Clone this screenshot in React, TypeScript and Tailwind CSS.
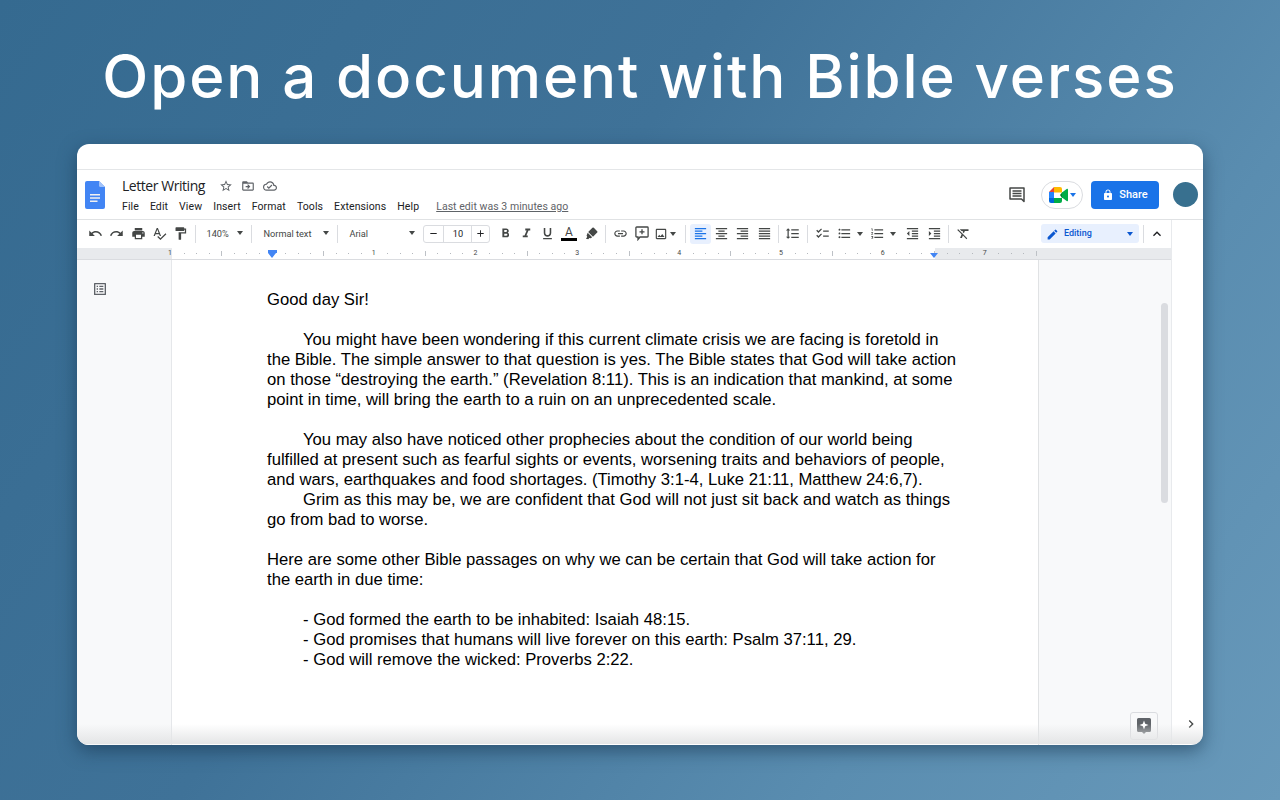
import type { ReactNode } from "react";
import {
  MdUndo,
  MdRedo,
  MdPrint,
  MdSpellcheck,
  MdFormatPaint,
  MdFormatBold,
  MdFormatItalic,
  MdFormatUnderlined,
  MdLink,
  MdOutlineImage,
  MdFormatAlignLeft,
  MdFormatAlignCenter,
  MdFormatAlignRight,
  MdFormatAlignJustify,
  MdFormatLineSpacing,
  MdChecklist,
  MdFormatListBulleted,
  MdFormatListNumbered,
  MdFormatIndentDecrease,
  MdFormatIndentIncrease,
  MdFormatClear,
  MdEdit,
  MdExpandLess,
  MdChevronRight,
  MdStarBorder,
  MdDriveFileMoveOutline,
  MdOutlineCloudDone,
  MdLock,
  MdOutlineListAlt,
  MdAdd,
  MdRemove,
} from "react-icons/md";

const menus = ["File", "Edit", "View", "Insert", "Format", "Tools", "Extensions", "Help"];

const Caret = ({ className = "border-t-[#444746]" }: { className?: string }) => (
  <span className={`inline-block w-0 h-0 border-x-[3.5px] border-x-transparent border-t-[4px] ${className}`} />
);

const Sep = ({ className = "mx-[4px]" }: { className?: string }) => (
  <span className={`w-px h-[18px] bg-[#dadce0] shrink-0 ${className}`} />
);

const Tool = ({ children, active = false }: { children: ReactNode; active?: boolean }) => (
  <span
    className={`w-[21.3px] h-[20px] flex items-center justify-center shrink-0 rounded-[3px] text-[15px] ${
      active ? "bg-[#e8f0fe] text-[#1a73e8]" : "text-[#444746]"
    }`}
  >
    {children}
  </span>
);

const DocsIcon = () => (
  <svg width="20" height="28" viewBox="0 0 20 28" className="shrink-0">
    <path d="M2 0h12l6 6v20a2 2 0 0 1-2 2H2a2 2 0 0 1-2-2V2a2 2 0 0 1 2-2z" fill="#4285f4" />
    <path d="M14 0l6 6h-4.500A1.500 1.500 0 0 1 14 4.500z" fill="#a1c2fa" />
    <path d="M5 13h10v1.400H5zM5 16.300h10v1.400H5zM5 19.600h7.500v1.400H5z" fill="#f1f1f1" />
  </svg>
);

const MeetIcon = () => (
  <svg width="19" height="16" viewBox="0 0 19 16" className="shrink-0">
    <path d="M0 5l5-5v5z" fill="#ea4335" />
    <path d="M0 5h5v6H0z" fill="#2684fc" />
    <path d="M0 11h5v5H2a2 2 0 0 1-2-2z" fill="#0066da" />
    <path d="M5 0h6a2 2 0 0 1 2 2v3.500H5z" fill="#ffba00" />
    <path d="M5 11h8v3a2 2 0 0 1-2 2H5z" fill="#00ac47" />
    <path d="M13 5.500L11 8l2 3 1-.5V5.500z" fill="#00832d" />
    <path d="M13 5.500L18 1.800c.5-.3 1 0 1 .6v11.200c0 .6-.5.9-1 .6L13 10.500z" fill="#00ac47" />
  </svg>
);

// comment history icon, square bubble with the tail at the bottom right
const CommentIcon = () => (
  <svg width="16" height="16" viewBox="0 0 16 16" fill="none" className="shrink-0">
    <path d="M1 1h14v13.500L12.500 12H1z" stroke="#444746" strokeWidth="1.500" strokeLinejoin="round" />
    <path d="M3.500 4h9M3.500 6.500h9M3.500 9h9" stroke="#444746" strokeWidth="1.300" />
  </svg>
);

const AddCommentIcon = () => (
  <svg width="14" height="15" viewBox="0 0 14 15" fill="none">
    <path d="M1.700 1h10.600a.8.8 0 0 1 .8.8v8.400a.8.8 0 0 1-.8.8H5L3 13.500V11H1.700a.8.8 0 0 1-.8-.8V1.800a.8.8 0 0 1 .8-.8z" stroke="#444746" strokeWidth="1.300" />
    <path d="M7 3.300v5M4.500 5.800h5" stroke="#444746" strokeWidth="1.300" />
  </svg>
);

const HighlighterIcon = () => (
  <svg width="13" height="13" viewBox="0 0 13 13">
    <path d="M8.800.8l3.400 3.400a1 1 0 0 1 0 1.400L8 9.800 3.200 5l4.200-4.200a1 1 0 0 1 1.400 0z" fill="#444746" />
    <path d="M2.700 5.800l4.500 4.500-1.500 1-1.400-.2-1 1.100-2.400-.4 1.300-1.700-.6-1.500z" fill="#444746" />
  </svg>
);

function Ruler() {
  // one inch is about 102px, the blank mark is where the left margin sits
  const marks = ["1", "", "1", "2", "3", "4", "5", "6", "7"];
  return (
    <div className="h-[12px] bg-[#e8eaed] border-b border-[#dadce0] flex shrink-0">
      <div className="w-[95px] shrink-0" />
      <div className="w-[763px] bg-white shrink-0" />
      <div className="absolute left-[91px] top-0 w-[870px] h-[11px] overflow-hidden flex text-[7px] leading-[11px] font-['Roboto',sans-serif] text-[#444746]">
        {marks.map((m, i) => (
          <span key={i} className="w-[101.830px] shrink-0 flex justify-between items-center pr-[10px]">
            <span className="w-[4px] text-center">{m}</span>
            {[0, 1, 2].map((d) => (
              <span key={d} className="w-[1px] h-[1px] bg-[#b4b8bd]" />
            ))}
            <span className="w-[1px] h-[5px] bg-[#bdc1c6]" />
            {[0, 1, 2].map((d) => (
              <span key={d} className="w-[1px] h-[1px] bg-[#b4b8bd]" />
            ))}
          </span>
        ))}
      </div>
    </div>
  );
}

export default function App() {
  return (
    <div className="w-[1280px] h-[800px] overflow-hidden bg-[linear-gradient(125deg,#356a90_0%,#3f7298_40%,#5a8db0_75%,#6899ba_100%)] flex flex-col items-center">
      <h1 className="h-[144px] w-full flex items-center justify-center pt-[8px] text-white text-[60px] font-medium tracking-[1.9px] font-['Inter',sans-serif] whitespace-nowrap">
        Open a document with Bible verses
      </h1>

      <div className="relative w-[1126px] h-[601px] bg-white rounded-[12px] overflow-hidden flex flex-col shadow-[0_6px_18px_rgba(20,50,75,0.55)] font-['Roboto',sans-serif]">
        <div className="h-[26px] border-b border-[#e4e6e8] shrink-0" />

        {/* title bar */}
        <div className="h-[50px] border-b border-[#e0e2e4] shrink-0 flex items-center pl-[8px] pr-[5px]">
          <DocsIcon />
          <div className="ml-[17px] mt-[2px] flex flex-col">
            <div className="flex items-center h-[22px] text-[#202124]">
              <span className="text-[14px] pb-[2px] font-['Open_Sans',sans-serif] tracking-[-0.45px]">Letter Writing</span>
              <span className="ml-[14px] flex items-center gap-[8px] text-[#5f6368] text-[14px]">
                <MdStarBorder />
                <MdDriveFileMoveOutline />
                <MdOutlineCloudDone />
              </span>
            </div>
            <div className="flex items-center h-[18px] mt-[1px] gap-[11px] text-[10.500px] text-[#202124] tracking-[0.1px]">
              {menus.map((m) => (
                <span key={m}>{m}</span>
              ))}
              <span className="ml-[6px] underline text-[#5f6368] tracking-[0.04px]">Last edit was 3 minutes ago</span>
            </div>
          </div>
          <div className="ml-auto flex items-center">
            <CommentIcon />
            <div className="ml-[16px] w-[42px] h-[28px] rounded-full border border-[#dadce0] flex items-center justify-center gap-[2px] bg-white">
              <MeetIcon />
              <Caret className="border-t-[#1a73e8]" />
            </div>
            <div className="ml-[8px] w-[68px] h-[28px] pt-[1px] rounded-[4px] bg-[#1a73e8] text-white text-[11px] font-medium flex items-center justify-center gap-[5px]">
              <MdLock className="text-[12px]" />
              Share
            </div>
            <div className="ml-[14px] w-[25px] h-[25px] rounded-full bg-[#38708f]" />
          </div>
        </div>

        <div className="flex flex-1 min-h-0">
          <div className="relative flex flex-col flex-1 min-w-0">
            {/* toolbar */}
            <div className="h-[28px] pb-[1px] shrink-0 flex items-center pl-[8px] pr-[1px] text-[#444746] text-[9.200px]">
              <Tool><MdUndo /></Tool>
              <Tool><MdRedo /></Tool>
              <Tool><MdPrint /></Tool>
              <Tool><MdSpellcheck /></Tool>
              <Tool><MdFormatPaint /></Tool>
              <Sep />
              <span className="w-[47px] flex items-center pl-[6px] gap-[8px] shrink-0">140%<Caret /></span>
              <Sep />
              <span className="w-[77px] flex items-center pl-[7px] justify-between pr-[4px] shrink-0">Normal text<Caret /></span>
              <Sep />
              <span className="w-[84px] flex items-center pl-[7px] justify-between pr-[11px] shrink-0">Arial<Caret /></span>
              <span className="w-[67px] h-[18px] border border-[#dadce0] rounded-[3px] flex items-center shrink-0 text-[#202124] -ml-[3px]">
                <span className="w-[19px] flex justify-center text-[11px]"><MdRemove /></span>
                <span className="flex-1 text-center border-x border-[#dadce0] leading-[16px]">10</span>
                <span className="w-[17px] flex justify-center text-[11px]"><MdAdd /></span>
              </span>
              <span className="w-[4px] shrink-0" />
              <Tool><MdFormatBold /></Tool>
              <Tool><MdFormatItalic /></Tool>
              <Tool><MdFormatUnderlined /></Tool>
              <Tool>
                <span className="flex flex-col items-center text-[12px] leading-[12px] text-[#444746]">
                  A<span className="w-[16px] h-[3px] bg-black" />
                </span>
              </Tool>
              <span className="w-[21.3px] flex justify-center shrink-0 pl-[3px]"><HighlighterIcon /></span>
              <Sep />
              <Tool><MdLink /></Tool>
              <Tool><AddCommentIcon /></Tool>
              <span className="w-[28px] flex items-center shrink-0 text-[14px] gap-[2px] pl-[1px]"><MdOutlineImage /><Caret /></span>
              <Sep />
              <Tool active><MdFormatAlignLeft /></Tool>
              <Tool><MdFormatAlignCenter /></Tool>
              <Tool><MdFormatAlignRight /></Tool>
              <Tool><MdFormatAlignJustify /></Tool>
              <Sep className="ml-[3px] mr-[3px]" />
              <Tool><MdFormatLineSpacing /></Tool>
              <Sep />
              <Tool><MdChecklist /></Tool>
              <span className="w-[37px] flex items-center shrink-0 text-[15px] pl-[4px] gap-[5px]"><MdFormatListBulleted /><Caret /></span>
              <span className="w-[32px] flex items-center shrink-0 text-[15px] gap-[5px]"><MdFormatListNumbered /><Caret /></span>
              <Tool><MdFormatIndentDecrease /></Tool>
              <Tool><MdFormatIndentIncrease /></Tool>
              <Sep className="ml-[3px] mr-[4px]" />
              <Tool><MdFormatClear /></Tool>
              <span className="ml-auto w-[98px] h-[19px] pt-[1px] rounded-[3px] bg-[#e8f0fe] text-[#0b57d0] text-[9px] font-medium flex items-center pl-[5px] pr-[6px] gap-[5px] shrink-0">
                <MdEdit className="text-[13px]" />
                Editing
                <Caret className="ml-auto border-t-[#0b57d0]" />
              </span>
              <Sep className="ml-[4px]" />
              <span className="w-[26px] flex justify-center text-[16px] text-[#202124] shrink-0"><MdExpandLess /></span>
            </div>

            <div className="relative">
              <Ruler />
              {/* indent markers on the ruler */}
              <span className="absolute left-[191px] top-[2px] w-[9px] h-[3px] bg-[#4285f4]" />
              <span className="absolute left-[191px] top-[5px] w-0 h-0 border-x-[4.500px] border-x-transparent border-t-[5px] border-t-[#4285f4]" />
              <span className="absolute left-[853px] top-[5px] w-0 h-0 border-x-[4.500px] border-x-transparent border-t-[5px] border-t-[#4285f4]" />
            </div>

            <div className="flex flex-1 min-h-0">
              <div className="w-[95px] shrink-0 bg-[#f8f9fa] border-r border-[#e5e7ea] pl-[15px] pt-[21px]">
                <MdOutlineListAlt className="text-[#5f6368] text-[16px]" />
              </div>

              <div className="w-[866px] shrink-0 bg-white pl-[95px] pt-[30px] text-black text-[16.670px] leading-[20px] font-['Liberation_Sans',Arial,sans-serif] whitespace-nowrap">
                <p>Good day Sir!</p>
                <p className="mt-[20px] indent-[36px]">You might have been wondering if this current climate crisis we are facing is foretold in</p>
                <p>the Bible. The simple answer to that question is yes. The Bible states that God will take action</p>
                <p>on those “destroying the earth.” (Revelation 8:11). This is an indication that mankind, at some</p>
                <p>point in time, will bring the earth to a ruin on an unprecedented scale.</p>
                <p className="mt-[20px] indent-[36px]">You may also have noticed other prophecies about the condition of our world being</p>
                <p>fulfilled at present such as fearful sights or events, worsening traits and behaviors of people,</p>
                <p>and wars, earthquakes and food shortages. (Timothy 3:1-4, Luke 21:11, Matthew 24:6,7).</p>
                <p className="indent-[36px]">Grim as this may be, we are confident that God will not just sit back and watch as things</p>
                <p>go from bad to worse.</p>
                <p className="mt-[20px]">Here are some other Bible passages on why we can be certain that God will take action for</p>
                <p>the earth in due time:</p>
                <p className="mt-[20px] indent-[36px]">- God formed the earth to be inhabited: Isaiah 48:15.</p>
                <p className="indent-[36px]">- God promises that humans will live forever on this earth: Psalm 37:11, 29.</p>
                <p className="indent-[36px]">- God will remove the wicked: Proverbs 2:22.</p>
              </div>

              <div className="relative flex-1 bg-[#f8f9fa] border-l border-[#e0e2e4]">
                <span className="absolute left-[122px] top-[43px] w-[7px] h-[200px] rounded-full bg-[#dadce0]" />
                <span className="absolute right-[13px] bottom-[5px] w-[28px] h-[28px] rounded-[3px] border border-[#dadce0] bg-[#f8f9fa] flex items-center justify-center">
                  <svg width="14" height="16" viewBox="0 0 14 16">
                    <path d="M1.500 0h11A1.500 1.500 0 0 1 14 1.500v11a1.500 1.500 0 0 1-1.500 1.500H9l-2 2-2-2H1.500A1.500 1.500 0 0 1 0 12.500v-11A1.500 1.500 0 0 1 1.500 0z" fill="#5f6368" />
                    <path d="M7 2.500l1.200 3.300L11.500 7 8.200 8.200 7 11.500 5.800 8.200 2.500 7l3.300-1.200z" fill="#fff" />
                  </svg>
                </span>
              </div>
            </div>
          </div>

          {/* side rail */}
          <div className="w-[32px] shrink-0 border-l border-[#e8eaed] flex flex-col items-center justify-end pb-[13px] pl-[6px] text-[#444746] text-[16px]">
            <MdChevronRight />
          </div>
        </div>

        {/* bottom fade of the window */}
        <div className="absolute left-0 right-0 bottom-[1px] h-[20px] bg-gradient-to-b from-transparent to-[#e4e5e6] pointer-events-none" />
      </div>
    </div>
  );
}
